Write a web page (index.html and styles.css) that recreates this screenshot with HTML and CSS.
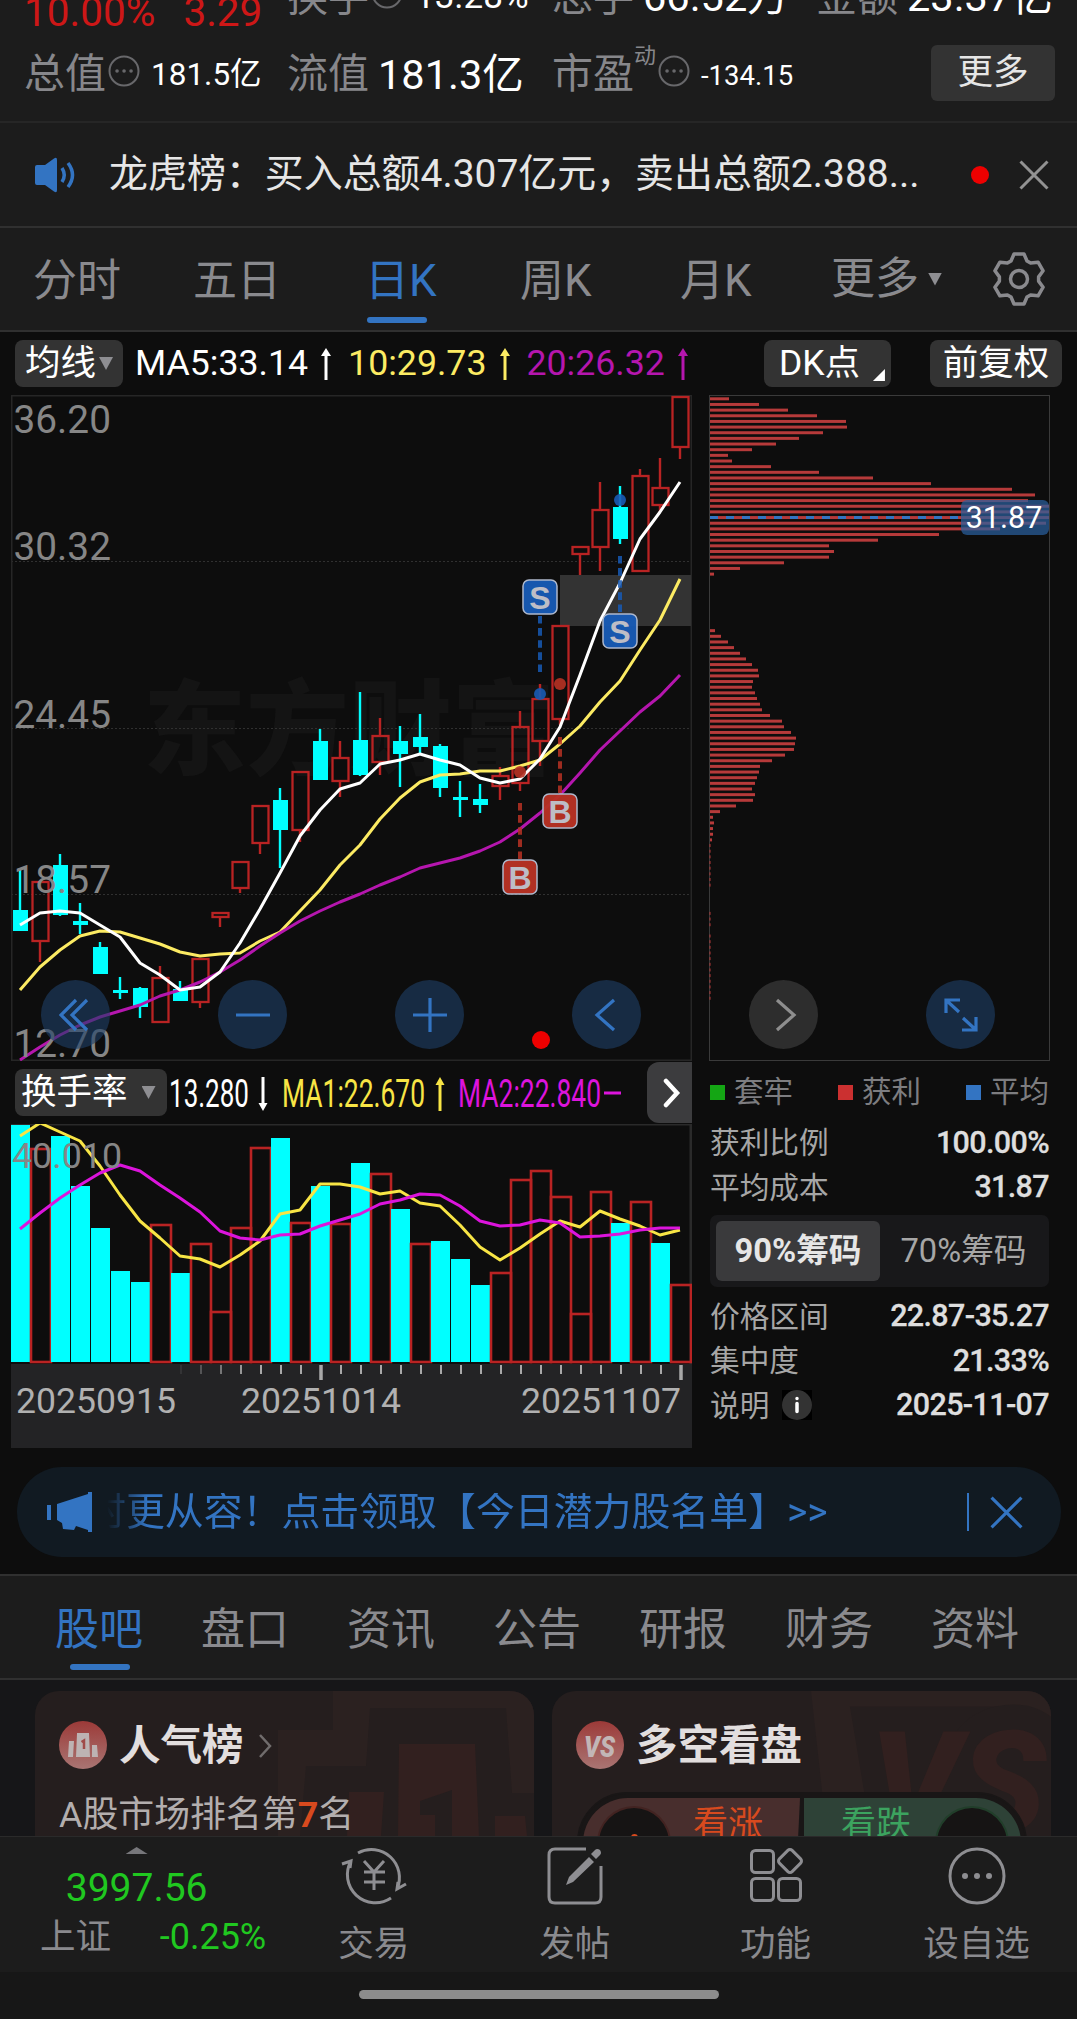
FILE: index.html
```html
<!DOCTYPE html>
<html lang="zh-CN">
<head>
  <meta charset="UTF-8" />
  <meta name="viewport" content="width=device-width, initial-scale=1.0"/>
  <title>日K</title>
  <link rel="stylesheet" href="styles.css">
</head>
<body>
  <header class="stats">
    <div class="stats-row first">
      <div class="cell price"><span>10.00%</span><span>3.29</span></div>
      <div class="cell"><span class="label">换手</span><svg class="more-dot" viewBox="0 0 32 32"><circle cx="16" cy="16" r="14.5"/><path d="M9 16h.1M16 16h.1M23 16h.1"/></svg><b class="mid">13.28%</b></div>
      <div class="cell"><span class="label">总手</span><b>66.52万</b></div>
      <div class="cell"><span class="label">金额</span><b>23.37亿</b></div>
    </div>
    <div class="stats-row">
      <div class="cell"><span class="label">总值</span><svg class="more-dot" viewBox="0 0 32 32"><circle cx="16" cy="16" r="14.5"/><path d="M9 16h.1M16 16h.1M23 16h.1"/></svg><b class="small">181.5亿</b></div>
      <div class="cell"><span class="label">流值</span><b>181.3亿</b></div>
      <div class="cell wide"><span class="label">市盈</span><sup>动</sup><svg class="more-dot" viewBox="0 0 32 32"><circle cx="16" cy="16" r="14.5"/><path d="M9 16h.1M16 16h.1M23 16h.1"/></svg><b class="tiny">-134.15</b></div>
      <button class="more-btn">更多</button>
    </div>
  </header>

  <div class="news">
    <svg class="speaker" viewBox="0 0 44 36"><path class="solid" d="M2 10q0-2 2-2h8L21 1.500q3-2 3 1.500v30q0 3.500-3 1.500L12 28H4q-2 0-2-2z"/><path d="M29 11q4.500 7 0 14M35 6q9 12 0 24"/></svg>
    <p>龙虎榜：买入总额4.307亿元，卖出总额2.388...</p>
    <i class="red-dot"></i>
    <svg class="close" viewBox="0 0 30 30"><path d="M1.500 1.500l27 27M28.500 1.500l-27 27"/></svg>
  </div>

  <nav class="periods">
    <a>分时</a>
    <a>五日</a>
    <a class="active">日K</a>
    <a>周K</a>
    <a>月K</a>
    <a class="drop">更多<i class="caret"></i></a>
    <svg class="gear" viewBox="-27 -27 54 54"><path d="M-5-25H5L8-18 11.600-15.900 19.100-16.800 24.100-8.200 19.600-2.100V2.100L24.100 8.200 19.100 16.800 11.600 15.900 8 18 5 25H-5L-8 18-11.600 15.900-19.100 16.800-24.100 8.200-19.600 2.100V-2.100L-24.100-8.200-19.100-16.800-11.600-15.900-8-18z"/><circle r="8.500"/></svg>
  </nav>

  <main class="market">
    <div class="indicators">
      <button class="pill ma">均线<i class="caret"></i></button>
      <span class="ma5">MA5:33.14</span><svg class="arrow ma5" viewBox="0 0 12 32"><path d="M6 6v26"/><path class="head" d="M6 0l5 8H1z"/></svg>
      <span class="ma10">10:29.73</span><svg class="arrow ma10" viewBox="0 0 12 32"><path d="M6 6v26"/><path class="head" d="M6 0l5 8H1z"/></svg>
      <span class="ma20">20:26.32</span><svg class="arrow ma20" viewBox="0 0 12 32"><path d="M6 6v26"/><path class="head" d="M6 0l5 8H1z"/></svg>
      <button class="pill dk">DK点<i class="corner"></i></button>
      <button class="pill fq">前复权</button>
    </div>

    <div class="charts">
      <section class="left">
        <svg id="kline" class="kline" viewBox="0 0 681 666"></svg>
        <div class="sub-head">
          <button class="pill rate">换手率<i class="caret"></i></button>
          <svg class="sub-values" viewBox="0 0 460 40">
            <text x="2" y="34" textLength="80" fill="#fff">13.280</text>
            <path stroke="#fff" d="M96 4v26"/><path fill="#fff" d="M91.500 30h9L96 38z"/>
            <text x="115" y="34" textLength="143" fill="#f8e545">MA1:22.670</text>
            <path stroke="#f8e545" d="M273 12v26"/><path fill="#f8e545" d="M268.500 12h9L273 4z"/>
            <text x="291" y="34" textLength="143" fill="#dc14dc">MA2:22.840</text>
            <path stroke="#dc14dc" d="M437 20h17"/>
          </svg>
          <button class="next"><svg viewBox="0 0 18 30"><path d="M3 3l11 12L3 27"/></svg></button>
        </div>
        <svg id="turnover" class="turnover" viewBox="0 0 681 240"></svg>
        <div class="axis">
          <svg id="ticks" viewBox="0 0 681 20"></svg>
          <div class="dates"><span>20250915</span><span>20251014</span><span>20251107</span></div>
        </div>
      </section>

      <section class="right">
        <svg id="chips" class="chips" viewBox="0 0 341 666"></svg>
        <div class="legend">
          <span><i class="green"></i>套牢</span>
          <span><i class="red"></i>获利</span>
          <span><i class="blue"></i>平均</span>
        </div>
        <dl><dt>获利比例</dt><dd>100.00%</dd></dl>
        <dl><dt>平均成本</dt><dd>31.87</dd></dl>
        <div class="toggle"><b>90%筹码</b><span>70%筹码</span></div>
        <dl><dt>价格区间</dt><dd>22.87-35.27</dd></dl>
        <dl><dt>集中度</dt><dd>21.33%</dd></dl>
        <dl><dt>说明<i class="info"><svg viewBox="0 0 30 30"><circle cx="15" cy="15" r="15"/><path d="M15 8.500v.1M15 13.500v8"/></svg></i></dt><dd>2025-11-07</dd></dl>
      </section>

      <div class="tools">
        <button><svg viewBox="0 0 34 34"><path d="M17 2L2 17l15 15M28 2L13 17l15 15"/></svg></button>
        <button><svg viewBox="0 0 34 34"><path d="M0 17h34"/></svg></button>
        <button><svg viewBox="0 0 34 34"><path d="M0 17h34M17 0v34"/></svg></button>
        <button><svg viewBox="0 0 34 34"><path d="M24 2L7 17l17 15"/></svg></button>
        <button class="gray"><svg viewBox="0 0 34 34"><path d="M10 2l17 15-17 15"/></svg></button>
        <button><svg viewBox="0 0 34 34"><path d="M2 15V2h14M2 2l13 12M32 19v13H18M32 32L19 20"/></svg></button>
      </div>
      <i class="red-dot on-chart"></i>
    </div>

    <div class="banner">
      <svg class="horn" viewBox="0 0 45 40"><path d="M0 13h4v15H0zM10 12L41 2V0h4v40h-4v-2l-12-4-2 4-11-1-1-6-5-3z"/></svg>
      <p>时更从容！点击领取【今日潜力股名单】&gt;&gt;</p>
      <svg class="close" viewBox="0 0 32 32"><path d="M1.500 1.500l29 29M30.500 1.500l-29 29"/></svg>
    </div>
  </main>

  <nav class="sections">
    <a class="active">股吧</a>
    <a>盘口</a>
    <a>资讯</a>
    <a>公告</a>
    <a>研报</a>
    <a>财务</a>
    <a>资料</a>
  </nav>

  <section class="cards">
    <article class="card">
      <svg class="art" viewBox="0 0 499 145"><path fill="#2b2120" d="M298 0v39h-55v106h256V0z"/><path fill="#251e1e" d="M265 145l6-70h60l4-58h136l6 85h22v43z"/><path fill="#32201f" d="M364 53h76l4 92h-27V99l-32 11v14h15v21h-37zM314 101h35l-3 44h-34zM460 125h30l2 20h-32z"/></svg>
      <h3><svg class="badge" viewBox="0 0 48 48"><defs><linearGradient id="bg" x2="0" y2="1"><stop stop-color="#9c3a38"/><stop offset="1" stop-color="#a97573"/></linearGradient></defs><circle cx="24" cy="24" r="24" fill="url(#bg)"/><path fill="#bdb3b3" d="M10 20h5l-1 16H9zM18 12h12l1 24H17zM33 24h5l1 12h-6z"/><path d="M22.500 21l2.500-1.500V28" fill="none" stroke="#a04a48" stroke-width="2.500"/></svg>人气榜<svg class="chev" viewBox="0 0 14 24"><path d="M2 1l10 11L2 23"/></svg></h3>
      <p>A股市场排名第<em>7</em>名</p>
    </article>
    <article class="card">
      <svg class="art" viewBox="0 0 499 145"><path fill="#2b2120" d="M259 0l16 145h224V0z"/><text x="318" y="142" textLength="176" lengthAdjust="spacingAndGlyphs">VS</text></svg>
      <h3><svg class="badge" viewBox="0 0 48 48"><circle cx="24" cy="24" r="24" fill="url(#bg)"/><text x="8" y="36" textLength="31" lengthAdjust="spacingAndGlyphs">VS</text></svg>多空看盘</h3>
      <div class="vote">
        <span class="up"><i></i>看涨</span>
        <span class="down">看跌<i></i></span>
      </div>
    </article>
  </section>

  <footer class="bottom">
    <div class="index">
      <i class="tri"></i>
      <strong>3997.56</strong>
      <div><span>上证</span><em>-0.25%</em></div>
    </div>
    <a><svg viewBox="0 0 66 60"><path d="M17 8a28 28 0 0 1 39 36M50 53A28 28 0 0 1 10 16M1 19l9-3-1 7M65 39l-9 5 1-7M23 16l10 11 10-11M33 27v18M23 27h21M23 37h21"/></svg>交易</a>
    <a><svg viewBox="0 0 66 60"><path d="M44 4H13q-6 0-6 6v42q0 6 6 6h40q6 0 6-6V21"/><path class="fill" d="M24 40l3-8 20-20 5 5-21 20zM49 9l4-4q2-2 5 0 2 3 0 5l-4 4z"/></svg>发帖</a>
    <a><svg viewBox="0 0 66 60"><rect x="8.500" y="5.500" width="22" height="22" rx="4"/><rect x="8.500" y="33.500" width="22" height="22" rx="4"/><rect x="35.500" y="33.500" width="22" height="22" rx="4"/><rect x="38" y="7" width="18" height="18" rx="3" transform="rotate(45 47 16)"/></svg>功能</a>
    <a><svg viewBox="0 0 66 60"><circle cx="33" cy="31" r="27"/><g class="fill"><circle cx="21" cy="31" r="3"/><circle cx="33" cy="31" r="3"/><circle cx="45" cy="31" r="3"/></g></svg>设自选</a>
  </footer>
  <div class="home"><i></i></div>

  <script src="script.js"></script>
</body>
</html>
```
FILE: styles.css
```css
* {
  box-sizing: border-box;
}

body {
  margin: 0;
  width: 1077px;
  height: 2019px;
  overflow: hidden;
  background: #161618;
  color: #fff;
  font-family: Roboto, "Noto Sans CJK SC", sans-serif;
  line-height: 1.2;
}

button {
  border: none;
  padding: 0;
  font: inherit;
  color: inherit;
}

i, em {
  font-style: normal;
}

p, h3, dl, dd {
  margin: 0;
}

svg {
  display: block;
  flex: none;
  fill: none;
}

/* quote header */
.stats {
  height: 123px;
  overflow: hidden;
  background: #1c1c1c;
  border-bottom: 2px solid #262626;
}

.stats-row {
  display: grid;
  grid-template-columns: 263px 265px 264px 1fr;
  align-items: center;
  height: 90px;
  padding-left: 24px;
}

.stats-row.first {
  height: 60px;
  margin-top: -30px;
}

.cell {
  display: flex;
  align-items: center;
  font-size: 41.5px;
  white-space: nowrap;
}

.first .cell {
  margin-top: -12px;
}

.cell b {
  font-weight: 400;
  margin-left: 9px;
}

.label {
  font-size: 41px;
  color: #87878b;
}

.first .price {
  gap: 28px;
  margin-top: 0;
  padding-top: 18px;
  font-size: 40.5px;
  color: #cd1717;
}

.more-dot {
  width: 32px;
  height: 32px;
  margin: -8px 0 0 2px;
  stroke: #68686b;
  stroke-width: 2;
}

.more-dot path {
  stroke-width: 3.5;
  stroke-linecap: round;
}

.cell .mid {
  font-size: 35px;
  margin-left: 12px;
}

.cell .small {
  font-size: 31.5px;
  margin-left: 11px;
}

.cell .tiny {
  font-size: 27.5px;
  margin-left: 11px;
}

.cell sup {
  align-self: flex-start;
  margin-top: -7px;
  font-size: 22px;
  color: #87878b;
}

.more-btn {
  width: 124px;
  height: 56px;
  margin: 0 0 5px 115px;
  border-radius: 6px;
  background: #333;
  color: #e6e6e6;
  font-size: 35.5px;
}

/* news line */
.news {
  display: flex;
  align-items: center;
  height: 105px;
  padding: 0 28px 0 33px;
  background: #1c1c1c;
  border-bottom: 2px solid #303030;
}

.news p {
  width: 815px;
  margin-left: 32px;
  font-size: 38.95px;
  color: #e6e6e6;
  white-space: nowrap;
}

.speaker {
  width: 44px;
  height: 36px;
  stroke: #3374c2;
  stroke-width: 3.5;
}

.speaker .solid {
  fill: #3374c2;
  stroke: none;
}

.red-dot {
  width: 18px;
  height: 18px;
  margin-left: 47px;
  border-radius: 50%;
  background: #ee0000;
}

.close {
  width: 30px;
  height: 30px;
  stroke: #929292;
  stroke-width: 3;
}

.news .close {
  margin-left: auto;
}

/* period tabs */
.periods {
  display: flex;
  align-items: center;
  position: relative;
  height: 104px;
  padding-left: 33px;
  background: #1c1c1c;
  border-bottom: 2px solid #303030;
  font-size: 44px;
  color: #8a8a8e;
}

.periods a {
  width: 161px;
  height: 104px;
  line-height: 109px;
}

.periods a:nth-child(1), .periods a:nth-child(4) {
  width: 160px;
}

.periods a:nth-child(2) {
  width: 172px;
}

.periods a:nth-child(3) {
  width: 155px;
}

.periods a:nth-child(5) {
  width: 151px;
}

.active {
  position: relative;
  color: #3374c2;
}

.active::after {
  content: "";
  position: absolute;
  left: 2px;
  bottom: 8px;
  width: 60px;
  height: 6px;
  border-radius: 3px;
  background: #3374c2;
}

.periods .drop {
  display: flex;
  align-items: center;
  width: 161px;
}

.caret {
  width: 14px;
  height: 13px;
  background: #8e8e92;
  clip-path: polygon(0 0, 100% 0, 50% 100%);
}

.drop .caret {
  margin-left: 9px;
}

.gear {
  width: 54px;
  height: 54px;
  stroke: #8a8a8e;
  stroke-width: 3.5;
  stroke-linejoin: round;
}

/* chart area */
.market {
  height: 1242px;
  background: #0d0d0d;
}

.indicators {
  display: flex;
  align-items: center;
  height: 63px;
  padding-left: 15px;
  font-size: 35.7px;
  white-space: nowrap;
}

.pill {
  display: flex;
  flex: none;
  align-items: center;
  height: 47px;
  border-radius: 8px;
  background: #333;
  font-size: 35.5px;
}

.pill.ma {
  width: 108px;
  padding-left: 10px;
  gap: 3px;
  margin-right: 12px;
}

.pill.dk {
  position: relative;
  width: 127px;
  padding-left: 15px;
  margin-left: 59px;
}

.pill.fq {
  width: 132px;
  margin-left: 39px;
  justify-content: center;
}

.corner {
  position: absolute;
  right: 6px;
  bottom: 6px;
  width: 12px;
  height: 12px;
  background: #fff;
  clip-path: polygon(100% 0, 100% 100%, 0 100%);
}

.arrow {
  width: 12px;
  height: 32px;
  margin: 0 16px 0 12px;
  stroke: currentColor;
  stroke-width: 3;
}

.arrow .head {
  fill: currentColor;
  stroke: none;
}

.ma5 {
  color: #fff;
}

.ma10 {
  color: #fceb63;
}

.ma20 {
  color: #b516ae;
}

.charts {
  position: relative;
  display: flex;
  gap: 17px;
  padding-left: 11px;
  height: 1054px;
}

.left {
  width: 681px;
}

.right {
  width: 341px;
}

.kline {
  width: 681px;
  height: 666px;
}

.chips {
  width: 341px;
  height: 666px;
}

.axis-label {
  font-size: 38.8px;
  fill: #868686;
}

.watermark {
  font-family: "Noto Sans CJK SC", sans-serif;
  font-weight: 900;
  font-size: 103px;
  fill: #141414;
}

.mark {
  font-family: "Liberation Sans", sans-serif;
  font-weight: 700;
  font-size: 32px;
  fill: #bdbdc6;
  text-anchor: middle;
}

.chip-label {
  font-size: 30.5px;
  fill: #fff;
  text-anchor: middle;
}

.tools {
  position: absolute;
  left: 41px;
  top: 585px;
  display: flex;
  gap: 108px;
}

.tools button {
  display: flex;
  align-items: center;
  justify-content: center;
  width: 69px;
  height: 69px;
  border-radius: 50%;
  background: rgba(30, 64, 104, 0.6);
}

.tools svg {
  width: 34px;
  height: 34px;
  stroke: #3374c2;
  stroke-width: 3.2;
}

.tools .gray {
  background: #2d2d2d;
}

.tools .gray svg {
  stroke: #8e8e8e;
}

.on-chart {
  position: absolute;
  left: 532px;
  top: 636px;
  margin: 0;
}

.sub-head {
  display: flex;
  align-items: center;
  height: 63px;
  padding-left: 4px;
}

.pill.rate {
  width: 152px;
  padding-left: 6px;
  gap: 14px;
}

.sub-values {
  width: 460px;
  height: 40px;
  margin-right: 20px;
  stroke-width: 3;
}

.sub-values text {
  font-size: 39px;
}

.next {
  display: flex;
  align-items: center;
  justify-content: center;
  width: 45px;
  height: 61px;
  border-radius: 12px 0 0 12px;
  background: #3c3c3e;
}

.next svg {
  width: 18px;
  height: 30px;
  margin-left: 4px;
  stroke: #fff;
  stroke-width: 4.5;
  stroke-linecap: round;
}

.turnover {
  width: 681px;
  height: 240px;
}

.axis {
  height: 84px;
  background: #232325;
}

.axis svg {
  width: 681px;
  height: 20px;
}

.dates {
  display: flex;
  justify-content: space-between;
  padding: 0 11px 0 5px;
  font-size: 35.6px;
  line-height: 34px;
  color: #b1b1b1;
}

.dates span:nth-child(2) {
  margin-right: 55px;
}

.legend {
  display: flex;
  justify-content: space-between;
  align-items: center;
  height: 59px;
  padding: 5px 1px 0 1px;
  font-size: 29.5px;
  color: #7d7d80;
}

.legend span {
  display: flex;
  align-items: center;
}

.legend i {
  width: 15px;
  height: 15px;
  margin-right: 9px;
}

.green {
  background: #14a614;
}

.red {
  background: #cb3030;
}

.blue {
  background: #3374c2;
}

dl {
  display: flex;
  justify-content: space-between;
  align-items: center;
  height: 44.3px;
  padding: 2px 1px 0;
  font-size: 29.7px;
  color: #a6a6a6;
}

dt {
  display: flex;
  align-items: center;
}

dd {
  font-size: 30.5px;
  font-weight: 500;
  letter-spacing: -0.65px;
  -webkit-text-stroke: 0.3px #dedede;
  color: #dedede;
}

.info {
  margin-left: 13px;
  background: #000;
}

.info svg {
  width: 30px;
  height: 30px;
}

.info circle {
  fill: #333;
}

.info path {
  stroke: #fff;
  stroke-width: 3.5;
  stroke-linecap: round;
}

.toggle {
  display: flex;
  height: 72px;
  margin: 6px 1px 7px;
  padding: 6px;
  border-radius: 7px;
  background: #18181a;
  font-size: 32.7px;
  line-height: 61px;
  text-align: center;
  color: #a6a6a6;
}

.toggle b {
  width: 164px;
  border-radius: 6px;
  background: #3a3a3c;
  color: #e6e6e6;
}

.toggle span {
  flex: 1;
  padding-left: 4px;
}

/* promo banner */
.banner {
  display: flex;
  align-items: center;
  height: 90px;
  margin: 18px 16px 0 17px;
  padding: 0 38px 0 30px;
  border-radius: 45px;
  background: #111a22;
}

.banner p {
  width: 882px;
  height: 38px;
  margin-left: -5px;
  border-right: 2px solid #3374c2;
  font-size: 38.9px;
  line-height: 37px;
  white-space: nowrap;
  color: #3374c2;
  -webkit-mask-image: linear-gradient(90deg, transparent 20px, #000 60px);
  mask-image: linear-gradient(90deg, transparent 20px, #000 60px);
}

.horn {
  width: 45px;
  height: 40px;
  fill: #3374c2;
}

.banner .close {
  width: 33px;
  height: 33px;
  margin-left: auto;
  stroke: #3374c2;
}

/* content tabs */
.sections {
  display: flex;
  height: 106px;
  padding-left: 55px;
  border-top: 2px solid #303030;
  border-bottom: 2px solid #303030;
  background: #1c1c1c;
  font-size: 44px;
  line-height: 108px;
  color: #8a8a8e;
}

.sections a {
  width: 146.5px;
}

.sections .active {
  color: #3374c2;
}

.sections .active::after {
  left: 15px;
}

.cards {
  display: flex;
  gap: 18px;
  height: 156px;
  padding: 11px 26px 0 35px;
  overflow: hidden;
}

.card {
  position: relative;
  width: 499px;
  height: 190px;
  padding: 30px 24px;
  border-radius: 24px;
  overflow: hidden;
  background: #251e1e;
}

.card .art {
  position: absolute;
  top: 0;
  left: 0;
  width: 499px;
  height: 145px;
}

.art text {
  font-size: 142px;
  font-style: italic;
  font-weight: 900;
  fill: #32201f;
  stroke: #251e1e;
  stroke-width: 50;
  paint-order: stroke;
}

.card h3 {
  position: relative;
  display: flex;
  align-items: center;
  height: 48px;
  padding-top: 2px;
  font-size: 41.5px;
  font-weight: 700;
  color: #e2dede;
}

.badge {
  width: 48px;
  height: 48px;
  margin: -2px 12px 0 0;
}

.badge text {
  font-size: 30px;
  font-style: italic;
  font-weight: 900;
  fill: #c2b6b6;
}

.chev {
  width: 14px;
  height: 24px;
  margin-left: 14px;
  stroke: #706c6c;
  stroke-width: 2.5;
}

.card p {
  position: relative;
  margin-top: 24px;
  font-size: 35.9px;
  line-height: 44px;
  color: #b3aeae;
}

.card p em {
  font-weight: 700;
  color: #d84a1e;
}

.vote {
  position: relative;
  display: flex;
  gap: 4px;
  height: 100px;
  margin: 23px 0 0 1px;
  width: 450px;
  padding: 4px;
  border: 2px solid #191616;
  border-radius: 50px;
  background: #191616;
  font-size: 35px;
  line-height: 54px;
}

.vote span {
  display: flex;
  justify-content: space-between;
  width: 221px;
  height: 90px;
}

.vote .up {
  padding: 0 37px 0 14px;
  border-radius: 45px 0 0 45px;
  background: #482e2d;
  color: #d84a1e;
  clip-path: polygon(0 0, 100% 0, 98% 100%, 0 100%);
}

.vote .down {
  padding: 0 12px 0 37px;
  border-radius: 0 45px 45px 0;
  background: #2e4237;
  color: #3ca35f;
}

.vote i {
  width: 74px;
  height: 74px;
  margin-top: 8px;
  border: 2px solid rgba(200, 80, 70, 0.25);
  border-radius: 50%;
  background: #161414;
}

.vote .down i {
  border-color: rgba(60, 163, 95, 0.3);
}

.vote .up i::after {
  content: "";
  display: block;
  width: 7px;
  height: 7px;
  margin: 26px auto 0;
  border-radius: 50%;
  background: #d84a1e;
}

/* bottom bar */
.bottom {
  display: flex;
  height: 136px;
  border-top: 1px solid #2a2a2a;
  background: #1c1c1c;
}

.bottom a {
  display: flex;
  flex-direction: column;
  align-items: center;
  width: 201.5px;
  padding-top: 8px;
  font-size: 35.5px;
  line-height: 42px;
  color: #8a8a8e;
}

.bottom svg {
  width: 66px;
  height: 60px;
  margin-bottom: 18px;
  stroke: #8e8e92;
  stroke-width: 3;
}

.bottom .fill {
  fill: #8e8e92;
  stroke: none;
}

.index {
  width: 274px;
}

.index strong {
  display: block;
  margin-top: 10px;
  font-size: 39px;
  font-weight: 400;
  line-height: 48px;
  text-align: center;
  color: #20c820;
}

.index div {
  display: flex;
  justify-content: space-between;
  padding: 0 7px 0 40px;
  font-size: 35.5px;
  line-height: 50px;
  color: #8a8a8e;
}

.index em {
  font-size: 36px;
  color: #20c820;
}

.tri {
  display: block;
  width: 22px;
  height: 7px;
  margin: 10px auto 0;
  background: #77777b;
  clip-path: polygon(50% 0, 100% 100%, 0 100%);
}

.home {
  display: flex;
  justify-content: center;
  height: 47px;
  padding-top: 18px;
  background: #171717;
}

.home i {
  width: 360px;
  height: 9px;
  border-radius: 5px;
  background: #8c8c8c;
}
```
FILE: script.js
```js
const CYAN = "#00ffff";
const RED = "#b92323";
const STEP = 20;
const cx = i => 9 + i * STEP;

// [up, high, top, bottom, low]
const candles = [
  [0, 474, 515, 536, 536], [1, 486, 486, 546, 567], [0, 459, 470, 520, 521], [0, 508, 526, 530, 539],
  [0, 547, 552, 579, 579], [0, 582, 595, 598, 604], [0, 592, 593, 612, 623], [1, 571, 582, 627, 627],
  [0, 586, 594, 606, 606], [1, 563, 563, 607, 613], [1, 517, 517, 522, 532], [1, 466, 466, 493, 498],
  [1, 410, 410, 448, 459], [0, 393, 405, 435, 473], [1, 376, 376, 435, 447], [0, 334, 346, 385, 385],
  [1, 346, 362, 386, 402], [0, 297, 345, 380, 381], [1, 323, 340, 367, 380], [0, 331, 346, 359, 392],
  [0, 319, 342, 352, 358], [0, 349, 351, 393, 402], [0, 386, 402, 405, 422], [0, 389, 404, 410, 418],
  [1, 372, 380, 391, 405], [1, 316, 331, 388, 396], [1, 289, 303, 346, 371], [1, 230, 230, 324, 330],
  [1, 151, 151, 159, 180], [1, 87, 114, 152, 176], [0, 91, 112, 144, 149], [1, 74, 80, 176, 176],
  [1, 63, 92, 110, 117], [1, 1, 1, 52, 64]
];

const ma5 = [530, 518, 516, 518, 530, 542, 568, 580, 595, 592, 577, 548, 514, 478, 441, 415, 394, 388, 369, 365, 359, 365, 370, 383, 388, 384, 364, 332, 280, 226, 188, 144, 117, 87];
const ma10 = [595, 572, 555, 541, 536, 537, 543, 549, 557, 561, 559, 558, 546, 537, 516, 495, 470, 450, 424, 403, 387, 380, 379, 376, 376, 371, 365, 349, 331, 307, 286, 255, 225, 184];
const ma20 = [665, 652, 640, 630, 622, 616, 610, 601, 595, 587, 577, 565, 551, 538, 526, 516, 507, 499, 490, 482, 473, 468, 463, 456, 447, 434, 418, 400, 378, 355, 336, 317, 301, 280];

function line(points, color) {
  const pts = points.map((y, i) => `${cx(i)},${y}`).join(" ");
  return `<polyline points="${pts}" stroke="${color}" stroke-width="3" stroke-linejoin="round"/>`;
}

function marker(x, y, letter, dash, dot) {
  const color = letter === "S" ? "#185bb5" : "#b83224";
  return `<path d="M${x} ${dash}v56" stroke="${color}" stroke-width="4" stroke-dasharray="7.6 4.5" opacity=".85"/>
    <circle cx="${x}" cy="${dot}" r="6" fill="${color}" opacity=".9"/>
    <rect x="${x - 17}" y="${y}" width="34" height="34" rx="6" fill="${color}" fill-opacity=".96" stroke="#aeb8cc" stroke-width="1.5"/>
    <text class="mark" x="${x}" y="${y + 28.5}">${letter}</text>`;
}

function drawKline() {
  let out = `<text class="watermark" x="132" y="372">东方财富</text>`;
  out += [166, 333, 499].map(y => `<path d="M0 ${y}.5h681" stroke="#303030" stroke-dasharray="2 2"/>`).join("");
  out += `<rect x=".5" y=".5" width="680" height="665" stroke="#262626" stroke-width="2"/>`;
  out += `<rect x="549" y="180" width="131" height="51" fill="#333"/>`;
  candles.forEach(([up, high, top, bottom, low], i) => {
    const x = cx(i);
    const color = up ? RED : CYAN;
    out += `<path d="M${x} ${high}V${top}M${x} ${bottom}V${low}" stroke="${color}" stroke-width="2.4"/>`;
    out += up
      ? `<rect x="${x - 7.5}" y="${top + 1}" width="16" height="${bottom - top - 1}" stroke="${RED}" stroke-width="2.3"/>`
      : `<rect x="${x - 7}" y="${top}" width="15" height="${bottom - top}" fill="${CYAN}"/>`;
  });
  out += line(ma10, "#fceb63") + line(ma20, "#b516ae") + line(ma5, "#fff");
  out += marker(529, 185, "S", 221, 299) + marker(609, 219, "S", 161, 105);
  out += marker(549, 399, "B", 342, 289) + marker(509, 465, "B", 408, 377);
  [["36.20", 38], ["30.32", 165], ["24.45", 333], ["18.57", 498], ["12.70", 662]].forEach(([t, y]) => {
    out += `<text class="axis-label" x="2.5" y="${y}">${t}</text>`;
  });
  document.getElementById("kline").innerHTML = out;
}

// [up, top]
const volumes = [
  [0, 1], [1, 25], [0, 12], [0, 62], [0, 104], [0, 147], [0, 158], [1, 101], [0, 149], [1, 120], [1, 188], [1, 104],
  [1, 24], [0, 14], [1, 99], [0, 62], [1, 100], [0, 39], [1, 50], [0, 85], [1, 120], [0, 117], [0, 135], [0, 161],
  [1, 149], [1, 56], [1, 47], [1, 73], [1, 190], [1, 68], [0, 99], [1, 78], [0, 119], [1, 161]
];
const rate1 = [12, -1, 8, 17, 42, 71, 97, 114, 132, 135, 143, 131, 117, 90, 86, 60, 60, 63, 70, 67, 79, 82, 101, 123, 136, 124, 110, 97, 103, 87, 95, 102, 111, 106];
const rate2 = [105, 89, 74, 61, 49, 41, 47, 61, 74, 88, 107, 114, 116, 111, 110, 102, 96, 90, 80, 76, 70, 71, 82, 97, 102, 101, 96, 99, 113, 112, 110, 106, 104, 104];

function drawTurnover() {
  let out = `<path d="M0 0h680v240" stroke="#2a2a2a" stroke-width="3"/>`;
  volumes.forEach(([up, top], i) => {
    const x = i * STEP;
    out += up
      ? `<rect x="${x}" y="${top}" width="20" height="${238 - top}" stroke="${RED}" stroke-width="2.6"/>`
      : `<rect x="${x}" y="${top}" width="19" height="${238 - top}" fill="${CYAN}"/>`;
  });
  out += line(rate1, "#f8e545") + line(rate2, "#dc14dc");
  out += `<text class="axis-label" style="font-size: 35.8px" x="1" y="43.5">40.010</text>`;
  document.getElementById("turnover").innerHTML = out;

  let ticks = "";
  for (let i = 8; i < 34; i++) {
    const big = i === 15 || i === 33;
    ticks += `<path d="M${cx(i) + 1} 1v${big ? 15 : 9}" stroke="#a8a8a8" stroke-width="${big ? 3.5 : 2}" opacity="${Math.min(1, (i - 7.5) / 4)}"/>`;
  }
  document.getElementById("ticks").innerHTML = ticks;
}

const chips = [
  19, 49, 78, 107, 136, 137, 113, 89, 66, 42, 18, 22, 61, 109, 163, 221, 302, 325, 318, 339, 339, 339, 336, 290, 229, 168, 119, 124, 119, 74, 30, 4,
  0, 0, 0, 0, 0, 0, 0, 0, 0,
  5, 11, 18, 24, 30, 36, 42, 48, 49, 43, 42, 45, 47, 50, 52, 60, 72, 74, 81, 86, 85, 84, 75, 62, 50, 49, 47, 45, 42, 45, 43, 26, 10, 3, 4, 3, 3, 2,
  1, 1, 1, 1, 1, 1, 1, 1, 0, 0, 0, 0, 1, 1, 1, 0, 1, 1, 1, 1, 1, 1, 1, 1, 1, 1, 1, 1
];

function drawChips() {
  let out = `<rect x=".5" y=".5" width="340" height="665" stroke="#3a3a3a"/>`;
  chips.forEach((w, i) => {
    if (!w) return;
    const x = w === 1 ? 0.5 : 1;
    out += `<rect x="${x}" y="${(2.3 + i * 5.655).toFixed(2)}" width="${w}" height="3" fill="#b63a3a"/>`;
  });
  out += `<path d="M1 122.5h252" stroke="#3374c2" stroke-width="3" stroke-dasharray="8 8"/>`;
  out += `<rect x="252" y="105" width="88" height="35" rx="6" fill="#2a5f9e" fill-opacity=".72"/>`;
  out += `<text class="chip-label" x="295" y="133">31.87</text>`;
  document.getElementById("chips").innerHTML = out;
}

drawKline();
drawTurnover();
drawChips();

// squeeze the narrow value labels
document.querySelectorAll(".sub-values text").forEach(t => t.setAttribute("lengthAdjust", "spacingAndGlyphs"));
```
